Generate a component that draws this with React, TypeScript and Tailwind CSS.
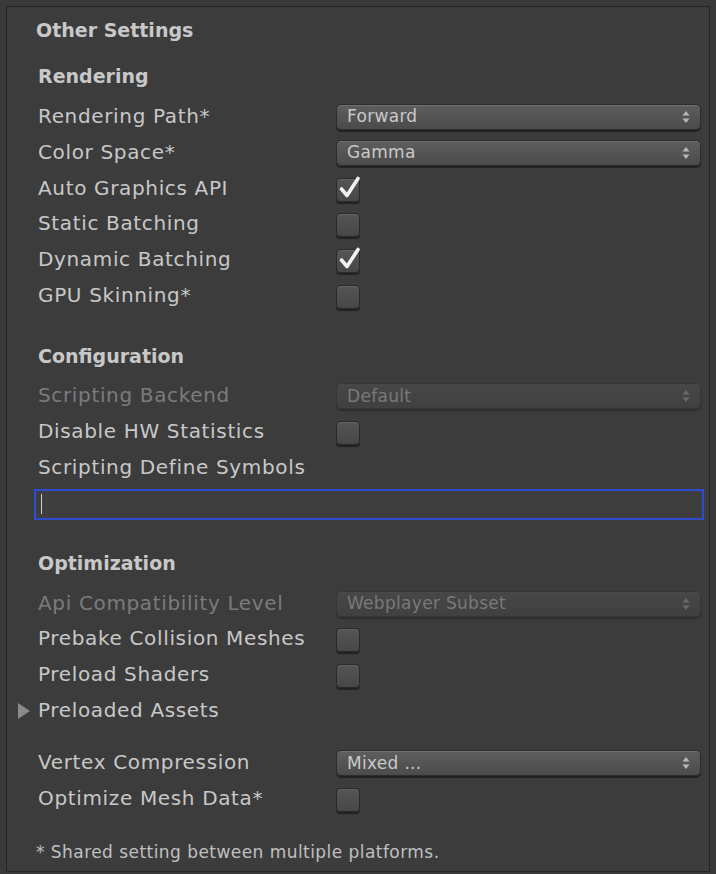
import React from "react";

const font = { fontFamily: '"DejaVu Sans", "Liberation Sans", sans-serif' };

function Arrows({ dim }: { dim?: boolean }) {
  return (
    <svg width="8" height="14" viewBox="0 0 8 14" className="shrink-0">
      <path d="M4 1 L7.5 5.5 L0.5 5.5 Z" fill={dim ? "#6a6a6a" : "#b8b8b8"} />
      <path d="M4 13 L7.5 8.5 L0.5 8.5 Z" fill={dim ? "#6a6a6a" : "#b8b8b8"} />
    </svg>
  );
}

function Dropdown({ value, disabled }: { value: string; disabled?: boolean }) {
  return (
    <div
      className={
        "flex h-[26px] w-[365px] items-center justify-between rounded-[5px] border pl-[10px] pr-[10px] text-[17px] tracking-[0.3px] " +
        (disabled
          ? "border-[#363636] bg-gradient-to-b from-[#474747] to-[#404040] text-[#797979] shadow-[0_2px_1px_rgba(0,0,0,0.25)]"
          : "border-[#2c2c2c] bg-gradient-to-b from-[#5e5e5e] to-[#4b4b4b] text-[#c9c9c9] shadow-[0_2px_1px_rgba(0,0,0,0.45),inset_0_1px_0_rgba(255,255,255,0.12)]")
      }
    >
      <span className="leading-none">{value}</span>
      <Arrows dim={disabled} />
    </div>
  );
}

function Checkbox({ checked }: { checked?: boolean }) {
  return (
    <div className="relative mt-[2px] h-[24px] w-[24px] rounded-[4px] border border-[#2a2a2a] bg-gradient-to-b from-[#555555] to-[#474747] shadow-[0_2px_1px_rgba(0,0,0,0.45),inset_0_1px_0_rgba(255,255,255,0.08)]">
      {checked && (
        <svg width="26" height="26" viewBox="0 0 26 26" className="absolute left-[0px] top-[-5px]">
          <path d="M4.5 15 L10 21.5 L21 4.5" fill="none" stroke="#f2f2f2" strokeWidth="3.6" strokeLinecap="round" strokeLinejoin="round" />
        </svg>
      )}
    </div>
  );
}

function Row({
  label,
  disabled,
  children,
  triangle,
}: {
  label: string;
  disabled?: boolean;
  children?: React.ReactNode;
  triangle?: boolean;
}) {
  return (
    <div className="flex h-[36px] items-center">
      <div className="relative flex w-[329px] shrink-0 items-center pl-[31px]">
        {triangle && (
          <svg width="14" height="18" viewBox="0 0 14 18" className="absolute left-[10px] top-1/2 -translate-y-1/2">
            <path d="M1 1 L13 9 L1 17 Z" fill="#8a8a8a" />
          </svg>
        )}
        <span className={"-mt-[2px] text-[20px] leading-none tracking-[0.65px] " + (disabled ? "text-[#7b7b7b]" : "text-[#c8c8c8]")}>{label}</span>
      </div>
      {children}
    </div>
  );
}

function Header({ children }: { children: React.ReactNode }) {
  return (
    <div className="flex h-[44px] items-center pl-[31px]">
      <span className="text-[19px] font-bold leading-none text-[#c8c8c8]">{children}</span>
    </div>
  );
}

export default function App() {
  return (
    <div className="h-[874px] w-[716px] bg-[#393939] pl-[6px] pt-[6px]" style={font}>
      <div className="flex h-[866px] w-[704px] flex-col border border-[#242424] bg-[#3c3c3c]">
        <div className="flex h-[47px] items-center pl-[29px]">
          <span className="text-[19px] font-bold leading-none text-[#c8c8c8]">Other Settings</span>
        </div>
        <div className="flex h-[45px] items-center pl-[31px]">
          <span className="text-[19px] font-bold leading-none text-[#c8c8c8]">Rendering</span>
        </div>
        <Row label="Rendering Path*"><Dropdown value="Forward" /></Row>
        <Row label="Color Space*"><Dropdown value="Gamma" /></Row>
        <Row label="Auto Graphics API"><Checkbox checked /></Row>
        <Row label="Static Batching"><Checkbox /></Row>
        <Row label="Dynamic Batching"><Checkbox checked /></Row>
        <Row label="GPU Skinning*"><Checkbox /></Row>

        <div className="h-[20px]" />
        <Header>Configuration</Header>
        <Row label="Scripting Backend" disabled><Dropdown value="Default" disabled /></Row>
        <Row label="Disable HW Statistics"><Checkbox /></Row>
        <Row label="Scripting Define Symbols" />
        <div className="mt-[3px] pl-[27px] pr-[5px]">
          <div className="flex h-[31px] items-center border-2 border-[#2f4bd0] bg-[#3e3e3e] pl-[5px]">
            <div className="h-[20px] w-[1px] bg-[#d0d0d0]" />
          </div>
        </div>

        <div className="h-[22px]" />
        <Header>Optimization</Header>
        <Row label="Api Compatibility Level" disabled><Dropdown value="Webplayer Subset" disabled /></Row>
        <Row label="Prebake Collision Meshes"><Checkbox /></Row>
        <Row label="Preload Shaders"><Checkbox /></Row>
        <Row label="Preloaded Assets" triangle />

        <div className="h-[16px]" />
        <Row label="Vertex Compression"><Dropdown value="Mixed ..." /></Row>
        <Row label="Optimize Mesh Data*"><Checkbox /></Row>

        <div className="h-[18px]" />
        <div className="flex h-[36px] items-center pl-[29px]">
          <span className="text-[17px] leading-none tracking-[0.45px] text-[#c0c0c0]">* Shared setting between multiple platforms.</span>
        </div>
      </div>
    </div>
  );
}
